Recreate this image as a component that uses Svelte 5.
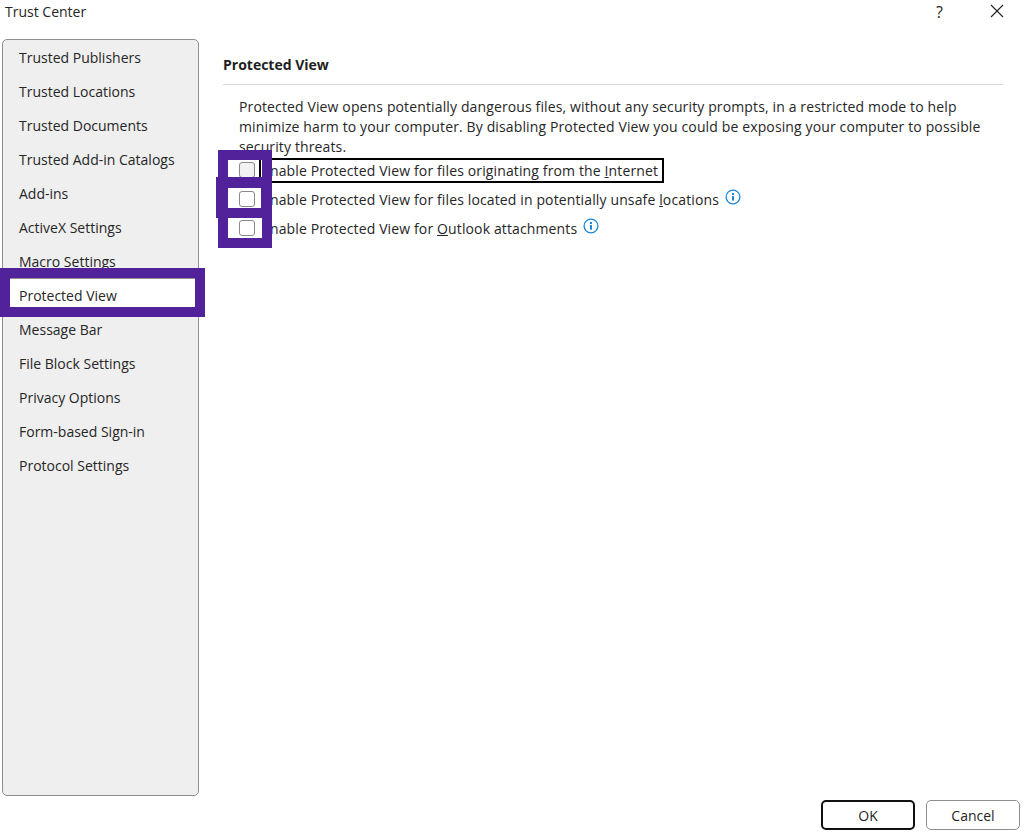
<script>
	const navItems = [
		'Trusted Publishers',
		'Trusted Locations',
		'Trusted Documents',
		'Trusted Add-in Catalogs',
		'Add-ins',
		'ActiveX Settings',
		'Macro Settings',
		'Protected View',
		'Message Bar',
		'File Block Settings',
		'Privacy Options',
		'Form-based Sign-in',
		'Protocol Settings'
	];
	const selected = 'Protected View';
</script>

<div class="dialog">
	<header class="titlebar">
		<span class="title">Trust Center</span>
		<span class="help">?</span>
		<svg class="close" width="14" height="14" viewBox="0 0 14 14">
			<path d="M1 1 L13 13 M13 1 L1 13" stroke="#222" stroke-width="1.1" fill="none" />
		</svg>
	</header>

	<div class="body">
		<nav class="sidebar">
			{#each navItems as item}
				<div class="nav-item" class:selected={item === selected}>{item}</div>
			{/each}
		</nav>

		<main class="content">
			<h2>Protected View</h2>
			<p>
				Protected View opens potentially dangerous files, without any security prompts, in a restricted mode to help minimize harm to your computer. By disabling Protected View you could be exposing your computer to possible security threats.
			</p>
			<div class="options">
				<label class="option">
					<span class="check first"></span>
					<span class="text focused">Enable Protected View for files originating from the <u>I</u>nternet</span>
				</label>
				<label class="option">
					<span class="check"></span>
					<span class="text">Enable Protected View for files located in potentially unsafe <u>l</u>ocations</span>
					<svg class="info" width="16" height="16" viewBox="0 0 16 16">
						<circle cx="8" cy="8" r="6.9" fill="none" stroke="#1b87d6" stroke-width="1.3" />
						<rect x="7" y="7" width="2" height="4.6" fill="#1b87d6" />
						<rect x="7" y="4" width="2" height="2" fill="#1b87d6" />
					</svg>
				</label>
				<label class="option">
					<span class="check"></span>
					<span class="text">Enable Protected View for <u>O</u>utlook attachments</span>
					<svg class="info" width="16" height="16" viewBox="0 0 16 16">
						<circle cx="8" cy="8" r="6.9" fill="none" stroke="#1b87d6" stroke-width="1.3" />
						<rect x="7" y="7" width="2" height="4.6" fill="#1b87d6" />
						<rect x="7" y="4" width="2" height="2" fill="#1b87d6" />
					</svg>
				</label>
			</div>
		</main>
	</div>

	<footer class="buttons">
		<button class="default">OK</button>
		<button>Cancel</button>
	</footer>

	<!-- annotation frames drawn on top of the screenshot -->
	<div class="mark mark-nav"></div>
	<div class="mark mark-1"></div>
	<div class="mark mark-3"></div>
	<div class="mark mark-2"></div>
</div>

<style>
	:global(body) {
		margin: 0;
		background: #fff;
	}

	.dialog {
		position: relative;
		width: 1024px;
		height: 836px;
		display: flex;
		flex-direction: column;
		overflow: hidden;
		background: #fff;
		color: #262626;
		font-family: 'Open Sans', 'Noto Sans', sans-serif;
		font-size: 14px;
	}

	.titlebar {
		height: 39px;
		flex: none;
		display: flex;
		align-items: flex-start;
		box-sizing: border-box;
		padding: 2px 20px 0 5px;
	}

	.title {
		flex: 1;
		line-height: 20px;
	}

	.help {
		line-height: 20px;
		font-size: 16px;
		margin-right: 47px;
	}

	.close {
		margin-top: 2px;
	}

	.body {
		display: flex;
		height: 757px;
		flex: none;
	}

	.sidebar {
		width: 197px;
		height: 757px;
		margin-left: 2px;
		box-sizing: border-box;
		background: #efefef;
		border: 1px solid #8f8f8f;
		border-radius: 5px;
		padding-top: 1px;
		flex: none;
	}

	.nav-item {
		height: 34px;
		line-height: 34px;
		padding-left: 16px;
		white-space: nowrap;
	}

	.nav-item.selected {
		background: #fff;
		box-shadow: 0 -1px 0 #8f8f8f;
	}

	.content {
		flex: 1;
		padding: 15px 21px 0 24px;
		letter-spacing: 0.13px;
	}

	h2 {
		margin: 0;
		font-size: 14px;
		font-weight: 700;
		line-height: 22px;
		padding-bottom: 8px;
		border-bottom: 1px solid #d9d9d9;
		color: #1f1f1f;
		letter-spacing: 0;
	}

	p {
		margin: 12px 0 0 16px;
		line-height: 20px;
		width: 760px;
	}

	.options {
		margin-top: 0;
		display: flex;
		flex-direction: column;
		gap: 3px;
	}

	.option {
		display: flex;
		align-items: center;
		height: 26px;
		padding-left: 16px;
		white-space: nowrap;
	}

	.check {
		width: 16px;
		height: 16px;
		flex: none;
		box-sizing: border-box;
		border: 1px solid #8a8a8a;
		border-radius: 3px;
		background: #fff;
		margin-right: 4px;
	}

	.check.first {
		background: #f2f2f2;
	}

	.text {
		border: 2px solid transparent;
		padding: 1px 4px 0 1px;
		line-height: 20px;
	}

	.focused {
		border-color: #000;
	}

	.info {
		margin: -5px 0 0 0;
	}

	.buttons {
		flex: 1;
		display: flex;
		justify-content: flex-end;
		align-items: flex-start;
		gap: 11px;
		padding: 4px 4px 0 0;
	}

	button {
		width: 94px;
		height: 30px;
		box-sizing: border-box;
		background: #fff;
		border: 1px solid #8f8f8f;
		border-radius: 5px;
		font: inherit;
		color: #262626;
		padding: 0;
	}

	button.default {
		border: 2px solid #111;
	}

	.mark {
		position: absolute;
		box-sizing: border-box;
		border: 10px solid #52229a;
	}

	.mark-nav {
		left: 0;
		top: 268px;
		width: 205px;
		height: 49px;
	}

	.mark-1 {
		left: 218px;
		top: 150px;
		width: 54px;
		height: 38px;
	}

	.mark-2 {
		left: 216px;
		top: 177px;
		width: 56px;
		height: 41px;
		border-right-width: 11px;
		border-left-width: 12px;
	}

	.mark-3 {
		left: 218px;
		top: 208px;
		width: 54px;
		height: 40px;
	}
</style>
